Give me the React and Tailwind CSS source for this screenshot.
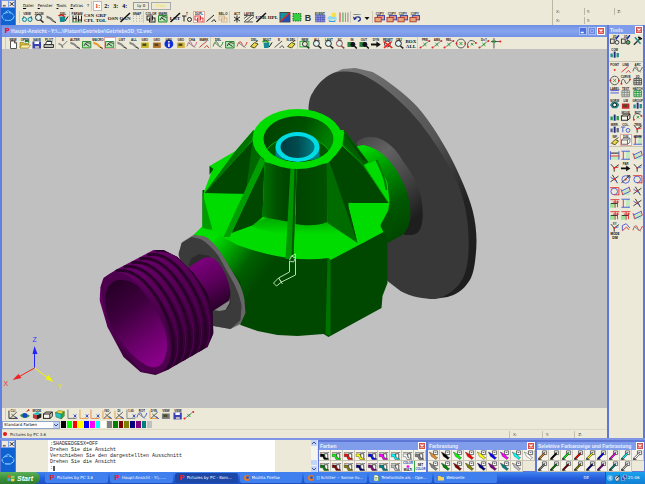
const INK = "#222222";

// Small drawings on a 24 x 24 grid, the caption takes the upper third
const shapes = {
  none: () => null,
  glasses: () => (
    <g fill="#bdf3f7" stroke="#16808c" strokeWidth="2">
      <circle cx="7" cy="17" r="4" />
      <circle cx="18" cy="17" r="4" />
      <path d="M3 16l3-6M22 16l-2-6" />
    </g>
  ),
  lens: (c) => (
    <g fill="none" stroke={c} strokeWidth="2">
      <circle cx="11" cy="13" r="6" fill="#dff4f4" />
      <path d="M15 18l6 5" strokeWidth="3" />
    </g>
  ),
  lensFrame: (c) => (
    <g fill="none" stroke={c} strokeWidth="2">
      <rect x="2" y="9" width="18" height="11" />
      <circle cx="12" cy="14" r="5" stroke="#333" />
      <path d="M15 18l6 5" stroke="#333" strokeWidth="3" />
    </g>
  ),
  clip: (c) => (
    <g>
      <path d="M3 9l9 4 7 7-3 2-7-6-6-2z" fill={c} />
      <path d="M17 21l5 2" stroke="#111" strokeWidth="2" />
    </g>
  ),
  paint: (c) => (
    <g>
      <path d="M5 11h12l-2 11H6z" fill="#168a93" />
      <path d="M3 10c4-4 10-2 12 2" fill="none" stroke={c} strokeWidth="3" />
      <path d="M16 20l6-9" stroke="#111" strokeWidth="2" />
    </g>
  ),
  frame: (c) => (
    <g fill="none" stroke={c} strokeWidth="2">
      <path d="M4 9v13M10 9v13M4 15h8M15 9v13M21 9v13M13 18h9" />
      <path d="M2 22h20" stroke="#58a55c" />
    </g>
  ),
  dots: () => (
    <g fill="#999">
      {[10, 15, 20].map((y) => [5, 11, 17, 22].map((x) => <circle key={`${x}-${y}`} cx={x} cy={y} r="1" />))}
    </g>
  ),
  slash: (c) => (
    <g stroke={c} strokeWidth="2" fill="none">
      <path d="M3 21L18 8M13 22l5-5 4 5" />
    </g>
  ),
  box: (c) => (
    <g fill="none" stroke={c} strokeWidth="2">
      <rect x="3" y="12" width="13" height="9" fill="#f7f5e9" />
      <path d="M3 12l5-4h13v9l-5 4M16 12l5-4" />
    </g>
  ),
  solid: (c) => (
    <g>
      <path d="M4 12l8 2v9l-8-3z" fill={c} />
      <path d="M12 14l9-3v8l-9 4z" fill="#222" />
      <path d="M4 12l9-4 8 3-9 3z" fill="#27b6ba" />
    </g>
  ),
  tee: (c) => (
    <g fill="none" stroke={c} strokeWidth="2">
      <path d="M2 10h9M6 10v11" />
      <circle cx="17" cy="17" r="4" />
    </g>
  ),
  pair: (c) => (
    <g fill="none" stroke={c} strokeWidth="2">
      <rect x="4" y="10" width="11" height="8" />
      <rect x="9" y="14" width="11" height="8" />
    </g>
  ),
  star: (c) => <path d="M12 9v14M6 12l12 8M18 12L6 20" stroke={c} strokeWidth="2" />,
  hatch: (c) => <path d="M2 15l8-6M3 21L17 9M9 22l13-11M2 9h20M2 22h18" stroke={c} strokeWidth="2" />,
  rgb: () => (
    <g>
      <rect x="2" y="3" width="20" height="19" fill="#1146c4" stroke="#444" strokeWidth="2" />
      <path d="M3 4h18L3 21z" fill="#11969a" />
      <path d="M3 21L21 4v17z" fill="#2151b3" />
      <path d="M3 21L21 4" stroke="#e22626" strokeWidth="3" />
    </g>
  ),
  green: () => <rect x="4" y="5" width="16" height="15" fill="#35cf42" stroke="#24682a" strokeWidth="2" strokeDasharray="3 2" />,
  grid: () => <path d="M3 8h19v14H3zM3 13h19M3 17h19M8 8v14M13 8v14M18 8v14" fill="#8a91e6" stroke="#3e459c" strokeWidth="1" />,
  cloud: () => (
    <g>
      <circle cx="16" cy="8" r="5" fill="#f6e04c" />
      <path d="M3 15c0-5 7-7 10-3 5-2 9 1 9 5H4z" fill="#8bd8f6" />
      <path d="M5 18c5 3 11 3 15 0l-2 4H7z" fill="#2b99dd" />
    </g>
  ),
  bars: () => (
    <g strokeWidth="2">
      <path d="M4 3v19" stroke="#d24" />
      <path d="M10 3v19" stroke="#3a3" />
      <path d="M15 3v19" stroke="#d77" />
      <path d="M20 3v19" stroke="#888" />
    </g>
  ),
  undo: () => (
    <g>
      <path d="M7 16c2-6 13-6 13 1 0 3-3 5-6 5" fill="none" stroke="#22318e" strokeWidth="3" />
      <path d="M2 11l3 9 7-4z" fill="#22318e" />
    </g>
  ),
  drop: () => <path d="M6 12h12l-6 7z" fill="#111" />,
  copy: () => (
    <g strokeWidth="2">
      <rect x="7" y="9" width="15" height="9" fill="#e79280" stroke="#3946a8" />
      <rect x="2" y="13" width="13" height="9" fill="#e9a878" stroke="#b43f37" />
    </g>
  ),
  page: () => <path d="M7 8h8l4 4v11H7zM15 8v4h4" fill="#fff" stroke="#555" strokeWidth="2" />,
  folder: () => (
    <g>
      <path d="M2 11h7l2 2h8v9H2z" fill="#d9bd2f" stroke="#75621a" strokeWidth="1" />
      <path d="M5 16h18l-4 6H2z" fill="#fff1a0" stroke="#75621a" strokeWidth="1" />
      <path d="M12 10c4-4 7-2 8 1" fill="none" stroke="#1a8a32" strokeWidth="3" />
    </g>
  ),
  disk: () => (
    <g>
      <path d="M3 9h17v14H3z" fill="#3a41b4" />
      <path d="M7 9h9v5H7z" fill="#fff" />
      <path d="M8 18h8v5H8z" fill="#bbb" />
    </g>
  ),
  plot: () => (
    <g stroke="#333" strokeWidth="2">
      <path d="M7 9h11l-2 6H5z" fill="#fff" />
      <path d="M2 15h19v6H2z" fill="#bbb" />
    </g>
  ),
  check: (c) => (
    <g fill="none" strokeWidth="3">
      <path d="M3 13l6 3 3 6" stroke={c} />
      <path d="M10 19L21 8" stroke="#777" strokeWidth="2" />
    </g>
  ),
  greenBox: () => (
    <g>
      <path d="M3 9h17v13H3z" fill="#b4e8b0" stroke="#2b8a35" strokeWidth="2" />
      <path d="M6 18c4-9 8-7 13-5M8 13l9 6" stroke="#333" strokeWidth="2" fill="none" />
    </g>
  ),
  barrel: (c) => (
    <g>
      <path d="M4 11h16v11H4z" fill={c} />
      <path d="M7 13h8v5H7z" fill="#4a4a20" />
    </g>
  ),
  info: () => (
    <g>
      <circle cx="12" cy="14" r="9" fill="#1530d8" />
      <path d="M12 13v7M12 8v3" stroke="#fff" strokeWidth="3" />
    </g>
  ),
  curve: (c) => (
    <g fill="none" strokeWidth="2">
      <path d="M2 19C6 5 11 9 12 15s6 7 10-5" stroke={c} />
      <path d="M4 11l15 10" stroke="#888" />
    </g>
  ),
  eraser: () => (
    <g strokeWidth="2" stroke="#55501c">
      <path d="M5 19l8-8 7 3-7 8z" fill="#e9d84e" />
      <path d="M15 10l5-3" />
    </g>
  ),
  arrow: () => <path d="M2 13h11V9l9 6-9 6v-4H2z" fill="#111" />,
  dark: () => (
    <g>
      <path d="M3 10h13v10H3z" fill="#2d7c37" />
      <circle cx="14" cy="15" r="5" fill="#112" />
      <path d="M17 18l5 5" stroke="#111" strokeWidth="3" />
    </g>
  ),
  reset: () => (
    <g strokeWidth="3">
      <circle cx="11" cy="14" r="6" fill="none" stroke="#444" strokeWidth="2" />
      <path d="M3 9l18 13M20 9L4 22" stroke="#e22" />
    </g>
  ),
  point: () => (
    <g>
      <path d="M4 21L20 8" stroke="#888" strokeWidth="2" />
      <path d="M9 12l6 6M15 12l-6 6" stroke="#2a9b39" strokeWidth="2" />
      <circle cx="3" cy="21" r="2" fill="#e22" />
      <circle cx="21" cy="8" r="2" fill="#e22" />
    </g>
  ),
  spot: () => <circle cx="12" cy="16" r="2" fill="#e22" />,
  tag: () => <path d="M3 9h18M3 14h18" stroke="#4a58d8" strokeWidth="2" />,
  circle: () => (
    <g>
      <circle cx="12" cy="13" r="9" fill="none" stroke="#555" strokeWidth="2" />
      <path d="M9 10l6 6M15 10l-6 6" stroke="#2a9b39" strokeWidth="2" />
      <circle cx="3" cy="13" r="2" fill="#e22" />
      <circle cx="21" cy="13" r="2" fill="#e22" />
    </g>
  ),
  arc: () => (
    <g>
      <path d="M4 20C0 10 11 1 20 12" fill="none" stroke="#555" strokeWidth="2" />
      <path d="M10 12l5 5M15 12l-5 5" stroke="#2a9b39" strokeWidth="2" />
      <circle cx="4" cy="20" r="2" fill="#e22" />
      <circle cx="20" cy="12" r="2" fill="#e22" />
    </g>
  ),
  cross: () => (
    <g strokeWidth="2">
      <path d="M8 2v21M2 9h20" stroke="#555" />
      <path d="M5 6l6 6M11 6l-6 6" stroke="#2a9b39" />
      <circle cx="21" cy="9" r="2" fill="#e22" />
    </g>
  ),
  axes: (c) => (
    <g strokeWidth="2" fill="none">
      <path d="M4 3v18h17" stroke={c} />
      <path d="M16 13l5 6M21 13l-5 6" stroke="#3145c6" />
    </g>
  ),
  axesDiag: (c) => (
    <g strokeWidth="2" fill="none">
      <path d="M4 5v16h17" stroke={c} />
      <path d="M6 21L20 8M9 12l10 9" stroke="#555" />
      <path d="M17 17l5 5" stroke="#3145c6" />
    </g>
  ),
  cube: () => (
    <g stroke="#33611c" strokeWidth="1">
      <path d="M3 9l7-4 11 2-6 5z" fill="#f6db36" />
      <path d="M3 9l12 3v10L4 18z" fill="#22c2cc" />
      <path d="M15 12l6-5v9l-6 6z" fill="#35a83a" />
    </g>
  ),
  land: () => (
    <g>
      <path d="M2 15c5-6 12-5 20 0-2 6-16 7-20 0z" fill="#35924b" />
      <circle cx="12" cy="15" r="5" fill="#1647c4" />
      <path d="M14 8l6-6 2 3z" fill="#b22" />
    </g>
  ),
  dimH: () => (
    <g strokeWidth="2">
      <path d="M2 14h20v8H2z" fill="#bfe9bd" />
      <path d="M3 4v18M21 4v18" stroke="#455ae0" />
      <path d="M4 8h16" stroke="#111" />
      <path d="M2 14h20" stroke="#d33" />
    </g>
  ),
  dimV: () => (
    <g strokeWidth="2">
      <path d="M13 3h8v19h-8z" fill="#bfe9bd" />
      <path d="M3 4h18M3 21h18" stroke="#455ae0" />
      <path d="M7 5v16" stroke="#d33" />
    </g>
  ),
  dimSlope: () => (
    <g strokeWidth="2">
      <path d="M3 13l17-6v14H3z" fill="#bfe9bd" />
      <path d="M3 12l17-8M5 20l16-7" stroke="#455ae0" />
      <path d="M2 8l4 12M19 3l3 10" stroke="#d33" />
    </g>
  ),
  fork: (c) => (
    <g strokeWidth="2" fill="none">
      <path d="M4 6l7 8v8M11 14l10-7" stroke="#333" />
      <path d="M11 14l9-2" stroke={c} />
      <circle cx="11" cy="14" r="2" fill="#e22" />
    </g>
  ),
  tangent: () => (
    <g strokeWidth="2" fill="none">
      <circle cx="12" cy="13" r="8" stroke="#4d5fd8" />
      <path d="M3 20L20 5M15 5h6v5" stroke="#333" />
      <circle cx="12" cy="13" r="2" fill="#e22" />
    </g>
  ),
  roundDim: () => (
    <g strokeWidth="2" fill="none">
      <circle cx="11" cy="13" r="7" stroke="#4d5fd8" />
      <path d="M2 5h19M21 5v16M11 20h10" stroke="#d33" />
    </g>
  ),
  crossing: () => (
    <g strokeWidth="2" fill="none">
      <path d="M3 18L20 6M7 3l11 18" stroke="#333" />
      <path d="M3 8l14 9" stroke="#4d5fd8" />
      <circle cx="11" cy="12" r="2" fill="#e22" />
    </g>
  ),
  corner: () => (
    <g strokeWidth="2" fill="none">
      <path d="M2 12h11v10H2z" fill="#9be39b" />
      <path d="M3 5h19M13 5v17M8 10h13M18 7v14" stroke="#d33" />
      <path d="M4 13h14" stroke="#333" />
    </g>
  ),
  hand: () => (
    <g strokeWidth="2" fill="none">
      <path d="M5 20V9l8-4 8 9" stroke="#4d5fd8" />
      <path d="M5 20l9-8 5 6" stroke="#d33" />
    </g>
  ),
  poly: (c) => (
    <g strokeWidth="2" fill="none">
      <path d="M3 20c0-14 7-10 8-4s6 4 10-5" stroke="#555" />
      <circle cx="3" cy="20" r="2" fill={c} />
      <circle cx="21" cy="11" r="2" fill={c} />
    </g>
  ),
  table: (c) => <path d="M4 9h16v13H4zM4 13h16M4 18h16M9 9v13M15 9v13" stroke={c} strokeWidth="2" fill="#dfead7" />,
  hammer: () => (
    <g>
      <path d="M4 22L19 7" stroke="#333" strokeWidth="3" />
      <path d="M6 6l12 14" stroke="#1d8b85" strokeWidth="3" />
      <path d="M14 4l8 5-3 3-7-5z" fill="#111" />
    </g>
  ),
  pen: (c) => (
    <g>
      <rect x="3" y="10" width="8" height="9" fill="none" stroke="#333" strokeWidth="2" />
      <circle cx="17" cy="17" r="4" fill={c} stroke="#333" strokeWidth="2" />
      <path d="M14 11l7-9" stroke="#15259a" strokeWidth="3" />
    </g>
  ),
  nut: () => (
    <g>
      <path d="M7 7h10l5 7-5 7H7l-5-7z" fill="#27858c" />
      <circle cx="12" cy="14" r="4" fill="#fff" stroke="#111" strokeWidth="2" />
    </g>
  ),
  parts: (c) => (
    <g>
      <path d="M3 13h5v8H3zM16 12h5v9h-5z" fill={c} />
      <path d="M10 9h4v13h-4z" fill="#1f2a80" />
    </g>
  ),
};

function Icon({ shape, cap, color = INK }) {
  return (
    <svg viewBox="0 0 24 24" className="h-3 w-full" aria-hidden="true">
      {shapes[shape](color)}
      {cap && (
        <text x="12" y="7" textAnchor="middle" fontSize="6" fontWeight="700" fontFamily="Liberation Sans, sans-serif" fill="#222">
          {cap}
        </text>
      )}
    </svg>
  );
}

function Tool({ item }) {
  const [shape, cap, color, on, low] = item;
  return (
    <button
      aria-label={cap || shape}
      className={`h-3 min-w-0 flex-1 ${on ? "bg-white outline outline-[#e3a9a0] -outline-offset-1" : ""}`}
    >
      {shape === "word" ? (
        <svg viewBox="0 0 24 24" className="h-3 w-full" aria-hidden="true">
          <text x="12" y={low && low !== "-" ? 12 : 17} textAnchor="middle" fontSize="10" fontWeight="700" fontFamily="Liberation Serif, serif" fill={color || "#111"}>
            {cap}
          </text>
          {low && low !== "-" && (
            <text x="12" y="22" textAnchor="middle" fontSize="10" fontWeight="700" fontFamily="Liberation Serif, serif" fill={color || "#111"}>
              {low}
            </text>
          )}
          {low === "-" && <path d="M3 22L22 4" stroke="#111" strokeWidth="3" />}
        </svg>
      ) : shape === "bold" ? (
        <svg viewBox="0 0 24 24" className="h-3 w-full" aria-hidden="true">
          <text x="12" y="20" textAnchor="middle" fontSize="18" fontWeight="700" fontFamily="Liberation Sans, sans-serif" fill="#333">
            {cap}
          </text>
        </svg>
      ) : (
        <Icon shape={shape} cap={cap} color={color} />
      )}
    </button>
  );
}

function Group({ items, width }) {
  return (
    <div className={`flex shrink-0 items-center border-l border-[#cfcbb8] pl-px ${width}`}>
      {items.map((item, i) => (
        <Tool key={i} item={item} />
      ))}
    </div>
  );
}

const mainTools = [
  ["w-[50px]", [["glasses", "VIEW"], ["lens", "ZOOM"], ["clip", "", "#777"], ["paint", "DEL", "#d22"]]],
  ["w-[74px]", [["frame", "PARAM"], ["word", "CSN", "", false, "CPL"], ["word", "GRP", "", false, "TOL"], ["word", "OSN"], ["word", "OAN", "", false, "-"], ["dots", "SNAP"]]],
  ["w-[86px]", [["pair", "COLOR", "#222"], ["greenBox", "MARK"], ["word", "LNT", "", false, "-"], ["tee", "T"], ["pair", "DUPL", "#d33", true], ["slash", "", "#222"], ["pair", "SEL-O", "#d9b48c"]]],
  ["w-[121px]", [["star", "ACT"], ["hatch", "LAYER", "#555"], ["word", "UNR", "", false, "-"], ["word", "HPL"], ["rgb"], ["green"], ["bold", "B"], ["grid", "EVENT"], ["cloud"], ["bars"]]],
  ["w-[22px]", [["undo", "UNDO"], ["drop"]]],
  ["w-[48px]", [["copy", "COPY"], ["copy", "COPY"], ["copy", "COPY"], ["copy", "COPY"]]],
];

const viewTools = [
  ["w-[50px]", [["page", "NEW"], ["folder", "OPEN"], ["disk", "SAVE"], ["plot", "PLOT"]]],
  ["w-[155px]", [["check", "E", "#888"], ["clip", "ALTER", "#888"], ["greenBox"], ["clip", "MACRO", "#e79b27"], ["greenBox", "", "", true], ["clip", "LIST", "#888"], ["clip", "ALL", "#888"], ["barrel", "GEO", "#c8b52a"], ["barrel", "GEO", "#b6712b"], ["info", "GEO"], ["barrel", "GEO", "#d0b33a"], ["curve", "CHA", "#d25a9c"], ["slash", "MARK", "#b44"]]],
  ["w-[87px]", [["curve", "DEL", "#2b8a35"], ["greenBox"], ["curve", "", "#d33"], ["eraser", "DEL"], ["paint", "MULT", "#2a2"], ["slash", "E", "#555"], ["eraser", "N-DEL"]]],
  ["w-[120px]", [["lensFrame", "NEW", "#39b54a"], ["lens", "ALL"], ["lens", "LAST"], ["lens", "SC", "#844"], ["dark", "IN"], ["dark", "OUT"], ["arrow", "DYN"], ["reset", "RESET"], ["lens", "OBJ"], ["word", "BOX", "", false, "ALL"]]],
  ["w-[85px]", [["point", "PRE"], ["point", "ABS"], ["point", "REL"], ["circle"], ["arc"], ["point", "D=?"], ["cross"]]],
];

const sideTop = [
  ["pen", "2D", "#eee"], ["pen", "3D", "#4caf50"], ["hammer"],
  ["parts", "COM", "#21908d"],
];

const sideDraw = [
  ["spot", "POINT"], ["slash", "LINE", "#d33"], ["curve", "ARC", "#555"],
  ["circle"], ["poly", "CURVE", "#d22"], ["table", "2D", "#555"],
  ["tag", "LABEL"], ["table", "TEXT", "#888"], ["table", "HATCH", "#329948"],
  ["nut", "NORM"], ["barrel", "LIB", "#c32434"], ["parts", "GROUP", "#21908d"],
  ["parts", "", "#1e9b54"], ["box", "MOVE"], ["arc", "ROT"],
  ["parts", "MIRR.", "#668"], ["tee", "COL.", "#4561c9"], ["fork", "TRIM", "#d22"],
  ["eraser", "INF"], ["box", "DIM", "#666", true], ["dimV", "ADIM"],
];

const sideDim = [
  ["dimH"], ["dimV"], ["dimSlope"],
  ["fork", "", "#d22"], ["arrow", "PAR"], ["fork", "", "#47d"],
  ["crossing"], ["tangent"], ["roundDim"],
  ["roundDim"], ["dimSlope"], ["crossing"],
  ["corner"], ["dimV"], ["crossing"],
  ["corner"], ["corner"], ["dimSlope"],
  ["fork", "XY", "#47d"], ["hand"], ["curve", "", "#d33"],
];

const shadeTools = [
  ["axesDiag", "CLI", "#333"], ["land"], ["solid", "MODE", "#c33"], ["box"], ["cube"], ["axes", "", "#777"],
  ["axes", "", "#e8a04c"], ["axes", "", "#e5874c"], ["axesDiag", "ISO", "#e8a04c"], ["axesDiag", "DI", "#e8a04c"],
  ["axes", "1.00", "#888"], ["curve", "ROT", "#3754d0"], ["axesDiag", "DYN", "#e8a04c"], ["barrel", "VIEW", "#777"],
  ["disk", "VIEW"], ["point"],
];

const palette = [
  "#000000", "#00ff00", "#ff0000", "#ffff00", "#0000ff", "#ff00ff", "#00ffff", "#ffffff",
  "#808080", "#008000", "#800000", "#808000", "#000080", "#800080", "#008080", "#c0c0c0",
];

function CloseBox() {
  return (
    <button aria-label="Close" className="size-2 shrink-0 border border-white bg-[#d9534a]">
      <svg viewBox="0 0 8 8" className="size-full">
        <path d="M2 2l4 4M6 2L2 6" stroke="#fff" strokeWidth="1.5" />
      </svg>
    </button>
  );
}

function LogoPanel() {
  return (
    <div className="flex w-4 shrink-0 flex-col border-x border-[#5674d8] bg-[#0f62cf]">
      <div className="flex h-2 shrink-0 justify-end gap-px bg-[#7d9ce8] p-px">
        <button aria-label="Minimize" className="flex-1 bg-[#ece9d8]">
          <svg viewBox="0 0 6 6" className="size-full"><path d="M1 5h3" stroke="#111" /></svg>
        </button>
        <button aria-label="Close" className="flex-1 bg-[#ece9d8]">
          <svg viewBox="0 0 6 6" className="size-full"><path d="M1 1l4 4M5 1L1 5" stroke="#111" /></svg>
        </button>
      </div>
      <svg viewBox="0 0 14 16" className="min-h-0 w-full flex-1">
        <ellipse cx="7" cy="8" rx="6" ry="4" fill="none" stroke="#8fd0ff" strokeDasharray="5 1" />
        <path d="M4 4l3-2 3 2M4 12h6" fill="none" stroke="#6bb8ff" />
      </svg>
    </div>
  );
}

function Header() {
  return (
    <header className="flex h-[25px] shrink-0 bg-[#ece9d8]">
      <LogoPanel />
      <div className="flex min-w-0 flex-1 flex-col pl-[3px]">
        <div className="flex h-[11px] items-center pt-px pl-1">
          <nav className="flex gap-1 text-[4px]">
            {["Datei", "Fenster", "Tools", "Extras", "?"].map((m) => (
              <a key={m} href="#menu" className="first-letter:underline">{m}</a>
            ))}
          </nav>
          <div className="ml-[2px] flex items-center border-l border-[#cfcbb8] pl-px font-['Liberation_Serif',serif] text-[6px] leading-[8px] font-bold">
            <button className="w-[9px] border border-[#bbb] bg-white text-[#d11]">1:</button>
            <button className="w-[9px]">2:</button>
            <button className="w-[9px]">3:</button>
            <button className="w-[9px]">4:</button>
          </div>
          <div className="ml-1 flex gap-[2px] text-[4px] leading-[6px]">
            <button className="w-4 border border-[#999]">Ly 0</button>
            <button className="w-5 border border-[#aaa] text-[#f2e51c]">Clafu</button>
          </div>
        </div>
        <div className="flex items-center">
          {mainTools.map(([width, items], i) => (
            <Group key={i} width={width} items={items} />
          ))}
        </div>
      </div>
      <div className="grid w-[93px] shrink-0 grid-cols-3 content-end gap-y-[2px] border-l border-[#bbb7a5] pb-px text-[4px] leading-[7px] text-[#444]">
        <span className="pl-[3px]">X:</span>
        <span className="border-l border-[#bbb7a5] pl-[2px]">Y:</span>
        <span className="border-l border-[#bbb7a5] pl-[2px]">Z:</span>
        <span className="pl-[3px]">X:</span>
        <span className="border-l border-[#bbb7a5] pl-[2px]">Y:</span>
      </div>
    </header>
  );
}

function Model() {
  const rib = "M115 271C124 268 138 273 151 290C164 307 173 328 173 345C173 357 171 364 167 369";
  return (
    <svg viewBox="2 49 604 359" className="block size-full" role="img" aria-label="Getriebe3D">
      <defs>
        <linearGradient id="rim" x1="0" y1="0" x2="1" y2="1">
          <stop offset="0" stopColor="#777" />
          <stop offset="0.5" stopColor="#555" />
          <stop offset="0.75" stopColor="#222" />
          <stop offset="1" stopColor="#1c1c1c" />
        </linearGradient>
        <linearGradient id="hub" x1="0" y1="0" x2="0.6" y2="1">
          <stop offset="0" stopColor="#444" />
          <stop offset="0.3" stopColor="#626262" />
          <stop offset="0.65" stopColor="#444" />
          <stop offset="1" stopColor="#1e1e1e" />
        </linearGradient>
        <linearGradient id="neck" x1="0.2" y1="0" x2="0.6" y2="1">
          <stop offset="0" stopColor="#00e000" />
          <stop offset="0.35" stopColor="#009000" />
          <stop offset="0.7" stopColor="#005800" />
          <stop offset="1" stopColor="#004800" />
        </linearGradient>
        <linearGradient id="front" gradientUnits="userSpaceOnUse" x1="212" y1="240" x2="262" y2="278">
          <stop offset="0" stopColor="#00e000" />
          <stop offset="0.3" stopColor="#00a800" />
          <stop offset="0.65" stopColor="#006000" />
          <stop offset="1" stopColor="#004800" />
        </linearGradient>
        <linearGradient id="barrelL" x1="0" x2="1">
          <stop offset="0" stopColor="#007400" />
          <stop offset="0.5" stopColor="#005000" />
          <stop offset="1" stopColor="#004200" />
        </linearGradient>
        <linearGradient id="barrelR" x1="0" x2="1">
          <stop offset="0" stopColor="#004400" />
          <stop offset="1" stopColor="#005200" />
        </linearGradient>
        <linearGradient id="bore" x1="0" x2="1" y2="0.3">
          <stop offset="0" stopColor="#004000" />
          <stop offset="0.6" stopColor="#005000" />
          <stop offset="1" stopColor="#008000" />
        </linearGradient>
        <linearGradient id="cyanBore" x1="0" x2="1">
          <stop offset="0" stopColor="#003c40" />
          <stop offset="0.5" stopColor="#004a4e" />
          <stop offset="1" stopColor="#007e86" />
        </linearGradient>
        <linearGradient id="shaft" x1="0.3" y1="0" x2="0.7" y2="1">
          <stop offset="0" stopColor="#800080" />
          <stop offset="0.5" stopColor="#5a005a" />
          <stop offset="1" stopColor="#230023" />
        </linearGradient>
        <linearGradient id="drum" x1="0.2" y1="0" x2="0.75" y2="1">
          <stop offset="0" stopColor="#720072" />
          <stop offset="0.5" stopColor="#4c004c" />
          <stop offset="1" stopColor="#250025" />
        </linearGradient>
        <linearGradient id="cup" x1="0.2" y1="0" x2="0.7" y2="1">
          <stop offset="0" stopColor="#260026" />
          <stop offset="0.35" stopColor="#3e003e" />
          <stop offset="0.7" stopColor="#690069" />
          <stop offset="1" stopColor="#880088" />
        </linearGradient>
        <linearGradient id="skirt" x1="0" y1="0" x2="0" y2="1">
          <stop offset="0" stopColor="#007000" />
          <stop offset="1" stopColor="#00e000" />
        </linearGradient>
        <clipPath id="drumClip">
          <path d="M99 300L100 287L103 278L115 270L153 250L163 250L177 257L193 273L207 293L212 313L213 333L207 347L167 370L155 375L140 372L123 357L107 327Z" />
        </clipPath>
        <clipPath id="boreClip">
          <ellipse cx="298" cy="139" rx="35" ry="23" />
        </clipPath>
      </defs>

      {/* Flange disc */}
      <path d="M333 73L342 69L355 68L372 72C385 79 405 94 417 107C430 122 441 140 450 157C458 172 468 195 472 210C476 225 477 242 475 257C474 268 472 277 468 282C463 290 455 295 447 297L433 299L417 290L380 90Z" fill="url(#rim)" />
      <path d="M308 110C308 102 310 95 312 93C314 89 317 85 320 82C325 77 330 74 333 73C344 70 354 72 360 74C375 80 391 93 403 105C418 119 433 140 443 157C449 168 454 176 457 183C464 200 468 220 468 237C469 252 467 268 463 277C458 287 448 297 433 299C425 299 410 297 400 291L387 281L340 200Z" fill="#383838" />
      <path d="M356 143C360 138 365 137 370 137C377 137 383 140 387 143C395 149 399 155 403 162C410 171 415 180 417 187C421 195 422 203 422 210C423 220 421 228 418 232C414 236 409 235 404 235L380 200Z" fill="url(#hub)" />
      <path d="M357 146L363 145C373 147 380 152 384 156C392 163 396 170 399 176C405 185 410 200 410 213C410 226 405 234 400 236L387 243L370 225L350 160Z" fill="url(#neck)" />

      {/* Housing */}
      <path d="M202 190V228L193 235L214 250L240 325L257 331L277 335L297 336L323 334L328 337L381 308L382 296L387 283V225L300 200Z" fill="#004800" />
      <path d="M202 226L193 235L207 238L240 282L245 313L240 324C258 325 270 300 275 256L230 215Z" fill="url(#front)" />
      <path d="M327 258L330 260V336L325 334Z" fill="#007200" />
      <path d="M203 193L211 172L209 166L235 151L253 130H343L363 165L377 160L387 183L389 202L387 215L380 226L383 232L330 260L328 258C300 262 270 257 237 245L224 238L202 228Z" fill="#00dc00" />
      <path d="M202 193V228L212 230Z" fill="#009c00" />
      <path d="M209 166V175L213 169Z" fill="#004800" />
      <path d="M235 151L253 130L254 138L204 193Z" fill="#007400" />
      <path d="M204 193L247 146L253 140L246 194Z" fill="#004700" />
      <path d="M253 134L264 160L244 202Z" fill="#006800" />
      <path d="M264 162L262 217L253 225L231 233Z" fill="#004700" />
      <path d="M260 157L265 162L229 237H223Z" fill="#009e00" />
      <path d="M251 226C262 211 334 211 347 231C330 238 268 236 251 226Z" fill="url(#skirt)" opacity="0.55" />
      <path d="M264 162L291 168L289 222L262 217Z" fill="url(#barrelL)" />
      <path d="M296 168L328 163L327 222C318 226 305 226 295 224Z" fill="url(#barrelR)" />
      <path d="M290 168H296L293 259H285Z" fill="#009600" />
      <path d="M294 168H296L293 259H291Z" fill="#005500" />
      <path d="M326 164L331 160L347 203L357 243L327 223Z" fill="#006c00" />
      <path d="M329 162L342 146L363 166L388 203H348V207L357 243Z" fill="#004700" />
      <path d="M342 145L344 130L368 162L362 166Z" fill="#005e00" />
      <path d="M342 144L363 165L388 203" fill="none" stroke="#008c00" />
      <path d="M342 130L367 162L362 160Z" fill="#004500" />
      <path d="M388 210L380 225L383 231L388 240L393 222Z" fill="#005000" />
      <path d="M376 160C382 173 385 180 386 190" fill="none" stroke="#007900" strokeWidth="2" />

      {/* Bearing seat */}
      <ellipse cx="297" cy="139" rx="45" ry="30" fill="#00dc00" />
      <ellipse cx="298" cy="139" rx="35" ry="23" fill="url(#bore)" />
      <g clipPath="url(#boreClip)">
        <ellipse cx="297" cy="157" rx="33" ry="20" fill="#005600" stroke="#00b000" />
        <path d="M275 147V160H319V147Z" fill="#007f88" />
        <ellipse cx="297" cy="147" rx="22" ry="15" fill="#00dce6" />
        <ellipse cx="297" cy="147" rx="17" ry="11" fill="url(#cyanBore)" />
      </g>

      {/* Sealing ring and shaft */}
      <path d="M178 253L182 242L193 235L203 236L207 238C214 243 219 250 223 257L237 280C241 287 243 294 244 300L245 313L240 324L230 329L213 326L190 290Z" fill="#666" />
      <path d="M178 255L181 243L191 237L200 239C207 243 213 249 218 256L232 281C237 290 240 299 241 306L240 320L230 329L213 326L190 290Z" fill="#3b3b3b" />
      <path d="M188 265L191 258L199 254L209 256L230 290V304L225 311L214 310Z" fill="#2b2b2b" />
      <path d="M212 310L229 295V303L225 310L219 311Z" fill="#888" />
      <path d="M187 268L203 258L208 257L214 259C222 266 227 277 229 287C230 293 230 298 228 301L211 312L195 300Z" fill="url(#shaft)" />

      {/* Threaded drum */}
      <g clipPath="url(#drumClip)">
        <rect x="95" y="245" width="125" height="135" fill="url(#drum)" />
        {[0, 1, 2, 3, 4, 5].map((n) => (
          <g key={n} transform={`translate(${n * 8} ${n * -4})`} fill="none">
            <path d={rib} stroke="#290029" strokeWidth="3" />
            <path d={rib} stroke="#6b006b" strokeWidth="1" transform="translate(4 -2)" opacity="0.6" />
          </g>
        ))}
        <path d="M100 287C102 277 107 272 116 272C133 273 155 301 166 328C174 350 172 368 157 374L140 372L107 327Z" fill="#4d004d" />
      </g>
      <path d="M105 302C104 290 110 280 119 280C127 280 132 282 137 286C149 298 159 315 164 329C168 341 167 352 164 359C161 366 157 368 151 367C145 366 137 360 130 353C122 344 115 333 111 326C107 318 105 309 105 302Z" fill="url(#cup)" />

      {/* Work plane marker */}
      <path d="M291 256L295 254V260M289 260L291 256L295 258L293 262L289 261V272L278 278M295 259V275L281 282M278 278L273 283L276 286L281 282L278 278M278 278L282 284" fill="none" stroke="#b5dcb5" />

      {/* Coordinate axes */}
      <g fontFamily="Liberation Sans, sans-serif" fontSize="7">
        <path d="M34 368V352" stroke="#2222ff" />
        <path d="M34 346L37 354H32Z" fill="#2222ff" />
        <text x="32" y="342" fill="#3333ff">Z</text>
        <path d="M34 368L18 377" stroke="#ee2222" />
        <path d="M12 380L18 374L21 378Z" fill="#ee2222" />
        <text x="3" y="386" fill="#ee3333">X</text>
        <path d="M34 368L49 379" stroke="#f4f400" />
        <path d="M53 382L45 379L48 375Z" fill="#f4f400" />
        <text x="57" y="389" fill="#e6e600">Y</text>
      </g>
    </svg>
  );
}

function DrawingWindow() {
  return (
    <section className="flex min-w-0 flex-1 flex-col border-l-2 border-[#6380e0]">
      <div className="flex h-3 shrink-0 items-center bg-linear-to-b from-[#6f8fe2] via-[#86a5ee] to-[#7492e4] pr-[2px] pl-px">
        <span className="w-2 text-center text-[7px] leading-none font-bold text-[#d8152c]">P</span>
        <h1 className="flex-1 truncate font-['Open_Sans',sans-serif] text-[5px] leading-[8px] font-bold text-[#dfe8ff]">
          Haupt-Ansicht - Y:\...\Platon\Getriebe\Getriebe3D_12.vec
        </h1>
        <div className="flex gap-px">
          <button aria-label="Minimize" className="size-2 border border-[#a9bdf4] bg-[#4c71da]">
            <svg viewBox="0 0 8 8" className="size-full"><path d="M1 6h4" stroke="#fff" strokeWidth="2" /></svg>
          </button>
          <button aria-label="Maximize" className="size-2 border border-[#a9bdf4] bg-[#6a89e2]">
            <svg viewBox="0 0 8 8" className="size-full"><path d="M2 2h4v4H2z" fill="none" stroke="#a9bdf4" /></svg>
          </button>
          <CloseBox />
        </div>
      </div>
      <div className="flex h-3 shrink-0 items-center bg-[#ece9d8] pl-[3px]">
        {viewTools.map(([width, items], i) => (
          <Group key={i} width={width} items={items} />
        ))}
      </div>
      <div className="min-h-0 flex-1 bg-[#c0c0c0]">
        <Model />
      </div>
      <footer className="shrink-0 bg-[#ece9d8]">
        <div className="flex pl-[3px]">
          <Group width="w-[190px]" items={shadeTools} />
        </div>
        <div className="flex h-[9px] items-center">
          <div className="relative w-[58px]">
            <select aria-label="Standard Farben" className="block h-2 w-full appearance-none border border-[#8ea6c9] bg-white pl-px text-[4px] leading-[6px]">
              <option>Standard Farben</option>
            </select>
            <svg viewBox="0 0 6 6" className="pointer-events-none absolute top-px right-px size-[6px] bg-[#c2d3fc]">
              <path d="M1 2l2 2 2-2" fill="none" stroke="#3a4f86" />
            </svg>
          </div>
          <div className="ml-px flex h-[7px] w-[91px] gap-px">
            {palette.map((c) => (
              <button key={c} aria-label={c} className="flex-1" style={{ backgroundColor: c }} />
            ))}
          </div>
        </div>
        <div className="flex h-[9px] items-center border-t border-[#dcd8c4] text-[4px] leading-[7px] text-[#222]">
          <span className="mx-px size-1 rounded-full bg-[#e01818]" />
          <span className="ml-[2px] flex-1">Pictures by PC 3.6</span>
          <div className="flex w-[98px] text-[#444]">
            {["X:", "Y:", "Z:"].map((t) => (
              <span key={t} className="flex-1 border-l border-[#c5c1ae] pl-[3px]">{t}</span>
            ))}
          </div>
        </div>
      </footer>
    </section>
  );
}

function ToolsPanel() {
  return (
    <aside className="flex w-[38px] shrink-0 flex-col border-x-2 border-[#5f78d8] bg-[#ece9d8]">
      <div className="flex h-[9px] shrink-0 items-center justify-between bg-[#7f9dea] pl-px font-['Liberation_Sans',sans-serif] text-[5px] leading-[8px] font-bold text-[#eaf0ff]">
        Tools
        <CloseBox />
      </div>
      <div className="grid grid-cols-3 gap-y-px border-b border-[#c9c5b2] pb-[2px]">
        {sideTop.map((item, i) => (
          <Tool key={i} item={item} />
        ))}
      </div>
      <div className="grid h-[85px] grid-cols-3 content-between border-b border-[#c9c5b2] pb-px">
        {sideDraw.map((item, i) => (
          <Tool key={i} item={item} />
        ))}
      </div>
      <div className="mt-[2px] grid h-[83px] grid-cols-3 content-between">
        {sideDim.map((item, i) => (
          <Tool key={i} item={item} />
        ))}
      </div>
      <button className="w-3 text-center font-['Liberation_Sans',sans-serif] text-[3px] leading-[4px] font-bold">
        MODE DIM
      </button>
    </aside>
  );
}

function Swatch({ kind, color }) {
  if (kind === "color") {
    return (
      <svg viewBox="0 0 24 24" className="size-full">
        <text x="12" y="7" textAnchor="middle" fontSize="6" fontWeight="700" fontFamily="Liberation Sans, sans-serif">COLOR</text>
        <path d="M12 9h8v12h-6z" fill="#fff" stroke="#333" strokeWidth="2" />
        <path d="M2 9l9 1 2 8 9 3v2H11L8 16H2z" fill={color} stroke="#222" strokeWidth="1" />
      </svg>
    );
  }
  return (
    <svg viewBox="0 0 24 24" className="size-full">
      <path d="M12 2h10v9H12z" fill="#fff" stroke="#555" strokeWidth="2" />
      <path d="M15 6h4" stroke="#555" strokeWidth="2" />
      {kind === "spray" ? (
        <path d="M2 5l5 2 9 6 2 4 4 1-4 5-5-4-6-4-2-5z" fill={color} stroke="#333" strokeWidth="1" />
      ) : (
        <g>
          <path d="M3 22L17 8" stroke="#222" strokeWidth="5" />
          <path d="M5 20L17 8" stroke={color} strokeWidth="3" />
          <path d="M1 23h9" stroke="#444" strokeWidth="2" />
        </g>
      )}
    </svg>
  );
}

function PaletteWindow({ title, kind, colors, children }) {
  return (
    <section className="flex min-w-0 flex-1 flex-col border border-t-2 border-[#5f78d8] bg-[#ece9d8]">
      <div className="flex h-2 shrink-0 items-center justify-between bg-[#7f9dea] pl-px font-['Liberation_Sans',sans-serif] text-[5px] leading-[8px] font-bold whitespace-nowrap text-[#eaf0ff]">
        <h2>{title}</h2>
        <CloseBox />
      </div>
      <div className="grid grid-cols-9">
        {colors.map((c, i) => (
          <button key={i} aria-label={`${title} ${i + 1}`} className="h-[11px] border-r border-b border-[#c9c5b4] bg-[#f6f4ea]">
            <Swatch kind={kind} color={c} />
          </button>
        ))}
        {children}
      </div>
    </section>
  );
}

const rasterColors = ["#e58a2c", ...palette];

function CommandRow() {
  return (
    <section className="flex h-[34px] shrink-0 border-t-2 border-[#7d96e6] bg-[#ece9d8]">
      <LogoPanel />
      <div className="ml-8 w-[227px] shrink-0 bg-white pt-px pl-[2px] font-['Liberation_Mono',monospace] text-[5px] leading-[6px] text-[#222]">
        <p>:SHADEEDGESX=OFF</p>
        <p>Drehen Sie die Ansicht</p>
        <p>Verschieben Sie den dargestellten Ausschnitt</p>
        <p>Drehen Sie die Ansicht</p>
        <label className="flex items-center">
          :<span className="h-[5px] w-[2px] bg-[#555]" />
          <input aria-label="Command" className="w-20 outline-none" />
        </label>
      </div>
      <div className="flex-1" />
      <div className="mr-px flex w-[6px] shrink-0 flex-col justify-between bg-[#f5f4ee]">
        <button aria-label="Scroll up" className="h-[6px] bg-[#c2d3fc]">
          <svg viewBox="0 0 6 6" className="size-full"><path d="M1 4l2-2 2 2" fill="none" stroke="#3a4f86" /></svg>
        </button>
        <div className="mt-auto mb-px h-[5px] bg-[#c2d3fc]" />
        <button aria-label="Scroll down" className="h-[6px] bg-[#c2d3fc]">
          <svg viewBox="0 0 6 6" className="size-full"><path d="M1 2l2 2 2-2" fill="none" stroke="#3a4f86" /></svg>
        </button>
      </div>
      <div className="flex w-[327px] shrink-0">
        <PaletteWindow title="Farben" kind="color" colors={palette}>
          <button aria-label="Multi" className="h-[11px] bg-[#f6f4ea]">
            <svg viewBox="0 0 24 24" className="size-full">
              <text x="12" y="7" textAnchor="middle" fontSize="6" fontWeight="700" fontFamily="Liberation Sans, sans-serif" fill="#2335b0">COLOR</text>
              <circle cx="12" cy="12" r="3" fill="#f0f" />
              <text x="12" y="22" textAnchor="middle" fontSize="6" fontWeight="700" fontFamily="Liberation Sans, sans-serif">MULTI</text>
            </svg>
          </button>
          <button aria-label="Set color" className="h-[11px] border-l border-[#37a545] bg-[#f6f4ea]">
            <svg viewBox="0 0 24 24" className="size-full">
              <text x="12" y="11" textAnchor="middle" fontSize="6" fontWeight="700" fontFamily="Liberation Sans, sans-serif">SET</text>
              <text x="12" y="20" textAnchor="middle" fontSize="6" fontWeight="700" fontFamily="Liberation Sans, sans-serif" fill="#2335b0">COLOR</text>
            </svg>
          </button>
        </PaletteWindow>
        <PaletteWindow title="Farbrastung" kind="spray" colors={rasterColors} />
        <PaletteWindow title="Selektive Farbanzeige und Farbrastung" kind="pencil" colors={rasterColors} />
      </div>
    </section>
  );
}

const tasks = [
  ["P", "Pictures by PC 3.6"],
  ["P", "Haupt-Ansicht - Y:\\......"],
  ["P", "Pictures by PC - Kom...", true],
  ["fox", "Mozilla Firefox"],
  ["fox", "[] Schiller -- Sonne liv..."],
  ["xls", "Telefonliste.xls - Ope..."],
  ["dir", "Webseite"],
];

function TaskIcon({ kind }) {
  if (kind === "P") return <span className="w-[6px] text-[7px] leading-none font-bold text-[#e8203a]">P</span>;
  return (
    <svg viewBox="0 0 12 12" className="size-[6px] shrink-0">
      {kind === "fox" && (
        <g>
          <circle cx="6" cy="6" r="6" fill="#ea7a1c" />
          <circle cx="7" cy="5" r="3" fill="#2f59c4" />
        </g>
      )}
      {kind === "xls" && <path d="M2 0h6l3 3v9H2zM4 5h5M4 8h5" fill="#fff" stroke="#6a9a35" strokeWidth="1.5" />}
      {kind === "dir" && <path d="M0 2h5l1 2h6v7H0z" fill="#f7d35c" />}
    </svg>
  );
}

function Taskbar() {
  return (
    <footer className="flex h-3 shrink-0 items-stretch bg-linear-to-b from-[#4284f0] via-[#265fdd] to-[#1e4fc0] text-[4px] text-white">
      <button className="flex w-10 items-center justify-center gap-[2px] rounded-r-md bg-linear-to-b from-[#5cb05a] via-[#3b953b] to-[#2e7a30] font-['Liberation_Sans',sans-serif] text-[7px] leading-none font-bold italic">
        <svg viewBox="0 0 16 16" className="size-2">
          <path d="M1 3c2-1 4-1 6 0v5c-2-1-4-1-6 0z" fill="#f0562b" />
          <path d="M8 3c2 1 4 1 7 0v5c-3 1-5 1-7 0z" fill="#8fd14a" />
          <path d="M1 9c2-1 4-1 6 0v5c-2-1-4-1-6 0z" fill="#4da6f5" />
          <path d="M8 9c2 1 4 1 7 0v5c-3 1-5 1-7 0z" fill="#fbd146" />
        </svg>
        Start
      </button>
      <div className="ml-[5px] flex w-[452px] gap-[2px] py-px">
        {tasks.map(([kind, label, active]) => (
          <button
            key={label}
            className={`flex min-w-0 flex-1 items-center gap-[2px] rounded-xs pl-1 whitespace-nowrap ${active ? "bg-[#1e48a8]" : "bg-[#3f80ee]"}`}
          >
            <TaskIcon kind={kind} />
            <span className="truncate">{label}</span>
          </button>
        ))}
      </div>
      <span className="ml-auto self-center pr-4">DE</span>
      <div className="flex w-10 items-center gap-px border-l border-[#0c59b9] bg-linear-to-b from-[#1aa0ee] to-[#1080d4] pl-px">
        <svg viewBox="0 0 40 16" className="h-2 w-5">
          <circle cx="6" cy="8" r="6" fill="#5cb8f5" />
          <path d="M8 5L5 8l3 3" fill="none" stroke="#fff" strokeWidth="2" />
          <path d="M15 6l5-3 5 3-2 8h-6z" fill="#ddd" stroke="#333" />
          <path d="M18 9l8-6" stroke="#222" strokeWidth="2" />
          <path d="M29 6h6v7h-6zM33 2h6v7h-6z" fill="#3546a8" stroke="#bcd" />
        </svg>
        <time>21:06</time>
      </div>
    </footer>
  );
}

export default function App() {
  return (
    <div className="flex h-screen flex-col overflow-hidden bg-[#ece9d8] font-['DejaVu_Sans',sans-serif] text-black">
      <Header />
      <main className="flex min-h-0 flex-1">
        <DrawingWindow />
        <ToolsPanel />
      </main>
      <CommandRow />
      <Taskbar />
    </div>
  );
}
